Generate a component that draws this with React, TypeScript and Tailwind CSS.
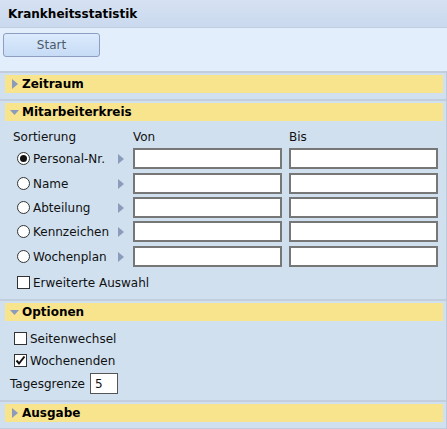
import React from "react";

const font = { fontFamily: '"DejaVu Sans", Verdana, sans-serif' };

function TriRight({ className = "" }: { className?: string }) {
  return (
    <svg width="6" height="10" viewBox="0 0 6 10" className={className}>
      <path d="M0 0 L6 5 L0 10 Z" fill="#8b9bbb" />
    </svg>
  );
}
function TriDown() {
  return (
    <svg width="9" height="5" viewBox="0 0 9 5">
      <path d="M0 0 L9 0 L4.5 5 Z" fill="#8b9bbb" />
    </svg>
  );
}

function SectionHeader({ title, open }: { title: string; open: boolean }) {
  return (
    <div className="ml-[5px] mr-[3px] h-[18px] bg-[#f9e48e] flex items-center">
      <div className="w-[17px] flex justify-center pl-[2px]">{open ? <TriDown /> : <TriRight />}</div>
      <span className="text-[12px] font-bold text-black leading-none">{title}</span>
    </div>
  );
}

function Radio({ checked }: { checked?: boolean }) {
  return (
    <div className="w-[13px] h-[13px] rounded-full border border-[#333] bg-white flex items-center justify-center shrink-0">
      {checked && <div className="w-[7px] h-[7px] rounded-full bg-[#111]" />}
    </div>
  );
}
function Check({ checked }: { checked?: boolean }) {
  return (
    <div className="w-[13px] h-[13px] border border-[#333] bg-white flex items-center justify-center shrink-0">
      {checked && (
        <svg width="11" height="11" viewBox="0 0 11 11">
          <path d="M1.5 5.5 L4 8.5 L9.5 1.5" stroke="#111" strokeWidth="2" fill="none" />
        </svg>
      )}
    </div>
  );
}

const rows = [
  { label: "Personal-Nr.", checked: true, mt: "mt-0" },
  { label: "Name", mt: "mt-[4px]" },
  { label: "Abteilung", mt: "mt-[3px]" },
  { label: "Kennzeichen", mt: "mt-[3px]" },
  { label: "Wochenplan", mt: "mt-[4px]" },
];

export default function App() {
  return (
    <div className="w-[447px] h-[429px] bg-[#e3eefc] text-[12px] text-[#111] overflow-hidden" style={font}>
      <div className="h-[28px] bg-gradient-to-b from-[#d6e2f3] to-[#cad9ee] border-b border-[#c0cee2] flex items-center pl-[8px]">
        <span className="font-bold text-[12px] text-black">Krankheitsstatistik</span>
      </div>
      <div className="pl-[3px] pt-[5px]">
        <div className="w-[97px] h-[24px] rounded-[3px] border border-[#8d9ec0] bg-gradient-to-b from-[#dcebfd] to-[#c6dbf5] flex items-center justify-center text-[#4c5a6c] text-[12px]">
          Start
        </div>
      </div>
      <div className="mt-[14px] bg-[#d0e0ef] border-r border-[#bccadd] w-[447px]">
        {/* Zeitraum */}
        <div className="border-t-2 border-[#c2cdde] pt-[2px] pb-[6px]">
          <SectionHeader title="Zeitraum" open={false} />
        </div>
        {/* Mitarbeiterkreis */}
        <div className="border-t-2 border-[#c2cdde] pt-[2px] pb-[9px]">
          <SectionHeader title="Mitarbeiterkreis" open={true} />
          <div className="flex h-[16px] mt-[8px] items-center">
            <span className="ml-[13px] w-[120px]">Sortierung</span>
            <span className="w-[156px]">Von</span>
            <span>Bis</span>
          </div>
          <div className="mt-[3px] flex flex-col">
            {rows.map((r) => (
              <div key={r.label} className={`flex items-center h-[21px] ${r.mt}`}>
                <div className="ml-[17px]">
                  <Radio checked={r.checked} />
                </div>
                <span className="ml-[3px] w-[84px] whitespace-nowrap">{r.label}</span>
                <TriRight className="ml-[1px]" />
                <div className="ml-[9px] w-[149px] h-[21px] border-2 border-[#777] bg-white" />
                <div className="ml-[7px] w-[149px] h-[21px] border-2 border-[#777] bg-white" />
              </div>
            ))}
          </div>
          <div className="flex items-center mt-[8px] h-[15px] ml-[17px]">
            <Check />
            <span className="ml-[3px]">Erweiterte Auswahl</span>
          </div>
        </div>
        {/* Optionen */}
        <div className="border-t-2 border-[#c2cdde] pt-[2px] pb-[6px]">
          <SectionHeader title="Optionen" open={true} />
          <div className="flex items-center mt-[10px] h-[15px] ml-[14px]">
            <Check />
            <span className="ml-[3px]">Seitenwechsel</span>
          </div>
          <div className="flex items-center mt-[7px] h-[15px] ml-[14px]">
            <Check checked />
            <span className="ml-[3px]">Wochenenden</span>
          </div>
          <div className="flex items-center mt-[5px] ml-[10px]">
            <span>Tagesgrenze</span>
            <div className="ml-[5px] w-[28px] h-[21px] border border-[#555] bg-white flex items-center pl-[4px]">5</div>
          </div>
        </div>
        {/* Ausgabe */}
        <div className="border-t-2 border-[#c2cdde] pt-[2px] pb-[6px] border-b-2">
          <SectionHeader title="Ausgabe" open={false} />
        </div>
      </div>
    </div>
  );
}
